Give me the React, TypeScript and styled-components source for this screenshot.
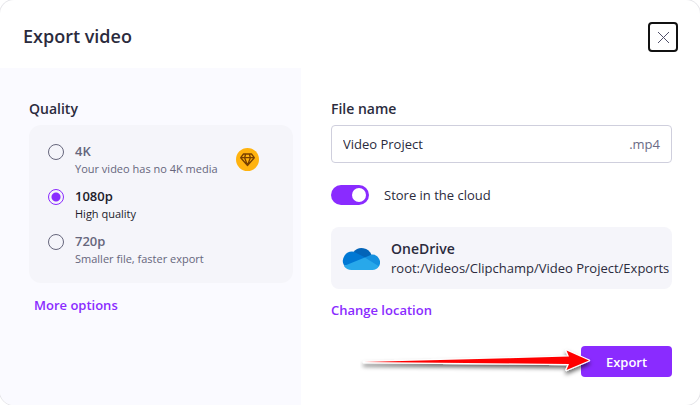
import React, { useState } from "react";
import styled, { createGlobalStyle } from "styled-components";

const purple = "#8a2bff";

const GlobalStyle = createGlobalStyle`
  *, *::before, *::after { box-sizing: border-box; }
  body { margin: 0; background: #fff; }
  body, button, input {
    font-family: "Segoe UI", "Open Sans", "Noto Sans", sans-serif;
    font-size: 13px;
    color: #2b2b3d;
  }
  h1, h2, h3, p, fieldset, legend { margin: 0; padding: 0; border: 0; }
`;

const Dialog = styled.main`
  display: flex;
  flex-direction: column;
  min-height: 100vh;
  border-radius: 14px;
  overflow: hidden;
  background: #fff;
  box-shadow: 0 0 0 1px #e6e6ea;
`;

const Header = styled.header`
  display: flex;
  align-items: center;
  justify-content: space-between;
  height: 68px;
  padding: 4px 22px 0 23px;
`;

const Title = styled.h1`
  font-size: 18px;
  line-height: 24px;
  font-weight: 600;
`;

const CloseButton = styled.button`
  display: grid;
  place-items: center;
  width: 30px;
  height: 30px;
  margin-top: 2px;
  padding: 0;
  border: 2px solid #111;
  border-radius: 4px;
  background: #fff;
`;

const Body = styled.div`
  flex: 1;
  display: grid;
  grid-template-columns: 43fr 57fr;
`;

const QualityPane = styled.section`
  padding: 31px 8px 16px 29px;
  background: #fafaff;
`;

const FilePane = styled.section`
  display: flex;
  flex-direction: column;
  align-items: stretch;
  padding: 31px 28px 28px 30px;
`;

const Heading = styled.h2`
  margin-bottom: 6px;
  font-size: 14px;
  line-height: 20px;
  font-weight: 600;
`;

const OptionCard = styled.fieldset`
  display: grid;
  gap: 9px;
  padding: 17px 34px 15px 19px;
  border-radius: 12px;
  background: #f5f5fa;
  position: relative;
`;

const Option = styled.label<{ $active: boolean }>`
  display: grid;
  grid-template-columns: 16px 1fr;
  column-gap: 11px;
  color: ${(p) => (p.$active ? "#1c1c2b" : "#66667c")};
`;

const Radio = styled.input`
  appearance: none;
  width: 16px;
  height: 16px;
  margin: 2px 0 0;
  border: 1px solid #66667c;
  border-radius: 50%;
  &:checked {
    border-color: ${purple};
    background: radial-gradient(circle, ${purple} 4px, transparent 5px);
  }
`;

const OptionName = styled.span`
  display: block;
  font-size: 13px;
  line-height: 18px;
  font-weight: 600;
`;

const OptionNote = styled.span`
  display: block;
  font-size: 11px;
  line-height: 18px;
`;

const PremiumBadge = styled.span`
  position: absolute;
  top: 23px;
  right: 34px;
  width: 23px;
  height: 23px;
  svg { display: block; }
`;

const TextLink = styled.a<{ $inset?: boolean }>`
  align-self: flex-start;
  display: inline-block;
  margin: ${(p) => (p.$inset ? "12px 0 0 5px" : "11px 0 0")};
  color: ${purple};
  font-size: 13px;
  line-height: 20px;
  font-weight: 600;
  text-decoration: none;
`;

const NameField = styled.div`
  display: flex;
  align-items: center;
  height: 38px;
  padding: 0 11px;
  border: 1px solid #cfcfdd;
  border-radius: 4px;
  background: #fff;
`;

const NameInput = styled.input`
  flex: 1;
  min-width: 0;
  padding: 0;
  border: 0;
  outline: 0;
  background: none;
`;

const Extension = styled.span`
  color: #6b6b85;
`;

const CloudToggle = styled.label`
  display: flex;
  align-items: center;
  gap: 15px;
  margin: 22px 0;
  line-height: 20px;
`;

const Switch = styled.input`
  appearance: none;
  display: flex;
  align-items: center;
  width: 38px;
  height: 20px;
  margin: 0;
  padding: 0 3px;
  border-radius: 10px;
  background: #9a9aab;
  &::before {
    content: "";
    width: 14px;
    height: 14px;
    border-radius: 50%;
    background: #fff;
  }
  &:checked { justify-content: flex-end; background: ${purple}; }
`;

const Destination = styled.div`
  display: flex;
  align-items: center;
  gap: 11px;
  min-height: 62px;
  padding: 0 2px 0 11px;
  border-radius: 8px;
  background: #f5f5fa;
  svg { flex: none; }
`;

const DestinationName = styled.h3`
  font-size: 14px;
  line-height: 20px;
  font-weight: 600;
`;

const Path = styled.p`
  font-size: 13px;
  line-height: 18px;
  white-space: nowrap;
`;

const Actions = styled.footer`
  display: flex;
  align-items: center;
  justify-content: flex-end;
  margin-top: auto;
  position: relative;
`;

const ExportButton = styled.button`
  width: 91px;
  height: 31px;
  padding: 0;
  border: 0;
  border-radius: 4px;
  background: ${purple};
  color: #fff;
  font-weight: 600;
`;

const Pointer = styled.svg`
  position: absolute;
  top: -2px;
  right: 72px;
  pointer-events: none;
`;

const qualities = [
  { id: "4K", note: "Your video has no 4K media" },
  { id: "1080p", note: "High quality" },
  { id: "720p", note: "Smaller file, faster export" },
];

const CloseIcon = () => (
  <svg width="13" height="13" viewBox="0 0 13 13" fill="none" stroke="#50506a" strokeWidth="1" aria-hidden="true">
    <path d="M1 1 12 12M12 1 1 12" />
  </svg>
);

const DiamondIcon = () => (
  <svg width="23" height="23" viewBox="0 0 23 23" aria-hidden="true">
    <circle cx="11.5" cy="11.5" r="11.5" fill="#ffb30f" />
    <path
      d="M7.5 6h8l2.8 3.7-6.8 7.8-6.8-7.8ZM4.9 9.7h13.2M8.6 9.7l2.9 7.5 2.9-7.5M8.6 9.7 9.7 6M14.4 9.7 13.3 6"
      fill="none"
      stroke="#784000"
      strokeWidth="1.3"
      strokeLinejoin="round"
    />
  </svg>
);

const OneDriveIcon = () => (
  <svg width="38" height="24" viewBox="0 0 38 24" aria-hidden="true">
    <path d="M11.5 5.9A10.6 10.6 0 0 1 29.6 9L22 14 10 8Z" fill="#0364b8" />
    <path d="M11.8 5.7 22.8 11.3 15 19 2.2 19.8A9.4 9.4 0 0 1 11.8 5.7Z" fill="#0078d4" />
    <path d="m22.8 11.4 6.4-2.7a7.8 7.8 0 0 1 7.7 11.7L24 18Z" fill="#1490df" />
    <path d="M22.8 11.4 36.9 20.2A7.7 7.7 0 0 1 30.2 24H9.5a9.4 9.4 0 0 1-7.6-3.9Z" fill="#28a8ea" />
  </svg>
);

export default function App() {
  const [quality, setQuality] = useState("1080p");
  const [name, setName] = useState("Video Project");
  const [cloud, setCloud] = useState(true);

  return (
    <>
      <GlobalStyle />
      <Dialog>
        <Header>
          <Title>Export video</Title>
          <CloseButton type="button" aria-label="Close"><CloseIcon /></CloseButton>
        </Header>
        <Body>
          <QualityPane>
            <Heading id="quality-heading">Quality</Heading>
            <OptionCard aria-labelledby="quality-heading">
              {qualities.map((q) => (
                <Option key={q.id} $active={quality === q.id}>
                  <Radio type="radio" name="quality" checked={quality === q.id} onChange={() => setQuality(q.id)} />
                  <span>
                    <OptionName>{q.id}</OptionName>
                    <OptionNote>{q.note}</OptionNote>
                  </span>
                </Option>
              ))}
              <PremiumBadge><DiamondIcon /></PremiumBadge>
            </OptionCard>
            <TextLink href="#options" $inset>More options</TextLink>
          </QualityPane>
          <FilePane>
            <Heading as="label" htmlFor="file-name">File name</Heading>
            <NameField>
              <NameInput id="file-name" type="text" value={name} onChange={(e) => setName(e.target.value)} />
              <Extension>.mp4</Extension>
            </NameField>
            <CloudToggle>
              <Switch type="checkbox" role="switch" checked={cloud} onChange={() => setCloud(!cloud)} />
              Store in the cloud
            </CloudToggle>
            <Destination>
              <OneDriveIcon />
              <div>
                <DestinationName>OneDrive</DestinationName>
                <Path>root:/Videos/Clipchamp/Video Project/Exports</Path>
              </div>
            </Destination>
            <TextLink href="#location">Change location</TextLink>
            <Actions>
              <ExportButton type="button">Export</ExportButton>
              <Pointer width="240" height="38" viewBox="0 0 240 38" aria-hidden="true">
                <defs>
                  <filter id="pointer-shadow" x="-5%" y="-50%" width="110%" height="220%">
                    <feDropShadow dx="0" dy="3" stdDeviation="2" floodColor="#000" floodOpacity="0.6" />
                  </filter>
                </defs>
                <path
                  d="M4 18 209 12.6 206.5 6.5 229 16.5 206.5 26 209 20Z"
                  fill="#f00"
                  stroke="#fff"
                  strokeWidth="2.4"
                  strokeLinejoin="round"
                  paintOrder="stroke"
                  filter="url(#pointer-shadow)"
                />
              </Pointer>
            </Actions>
          </FilePane>
        </Body>
      </Dialog>
    </>
  );
}
